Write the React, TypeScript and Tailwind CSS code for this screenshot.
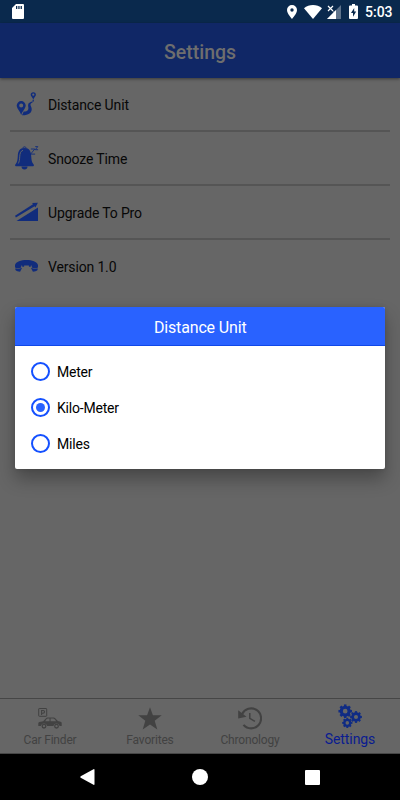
import type { ReactNode } from "react";
import clsx from "clsx";

type IconProps = { className?: string };

function RouteIcon({ className }: IconProps) {
  return (
    <svg viewBox="0 0 24 24" className={className} fill="currentColor">
      <path
        fillRule="evenodd"
        d="M6.2 9.1a4.500 4.500 0 0 0-4.500 4.500c0 2.900 3.200 5.300 4.500 9.400 1.300-4.100 4.500-6.500 4.500-9.400a4.500 4.500 0 0 0-4.500-4.500Zm0 2.400a2 2 0 1 1 0 4 2 2 0 0 1 0-4Z"
      />
      <path d="M7 23.300c5.800.3 10.100-2 9.700-6.500-.2-2.400-1.800-3.300-1.100-4.700.4-.8 1.300-1.100 2-1.500l-.6-1c-1.600.5-3.800 1.400-3.900 3.300-.1 1.900.7 2.800.1 4.500-.6 1.600-2.500 2.100-4.500 2.200Z" />
      <path
        fillRule="evenodd"
        d="M18.300.2a2.600 2.600 0 0 0-2.600 2.600c0 1.600 1.700 2.500 2.600 4.600.9-2.100 2.600-3 2.600-4.600A2.600 2.600 0 0 0 18.300.2Zm0 1.400a1.100 1.100 0 1 1 0 2.200 1.100 1.100 0 0 1 0-2.200Z"
      />
      <path d="M17.600 7.800h1.300l-.2 1.800-1.200.7Z" />
    </svg>
  );
}

function SnoozeIcon({ className }: IconProps) {
  return (
    <svg viewBox="0 0 24 24" className={className} fill="currentColor">
      <path d="M9.500 2.100c5 0 6.500 3.400 6.700 7.900.2 4.100.6 6.600 2.300 8.300.8.900.3 2-.8 2H1.300c-1.100 0-1.600-1.100-.8-2 1.700-1.700 2.100-4.200 2.300-8.300.2-4.500 1.700-7.900 6.700-7.900Z" />
      <path d="M6.500 20.600h6c0 1.900-1.200 3-3 3s-3-1.100-3-3Z" />
      <path d="M7.800 2.500c0-2.200 3.400-2.200 3.400 0" fill="none" stroke="currentColor" />
      <path d="M8 4.300c-2.500.8-3.100 3.100-3.300 6.600-.1 2.700-.5 5-1.400 6.600" fill="none" stroke="#666" strokeWidth=".9" />
      <path d="M15.900 3h3.900l-4.200 5.100h4.500M20.200.6h2.600l-2.500 3.100h2.800" fill="none" stroke="currentColor" strokeWidth=".9" />
    </svg>
  );
}

function UpgradeIcon({ className }: IconProps) {
  return (
    <svg viewBox="0 0 24 24" className={className} fill="currentColor">
      <path d="M1.500 21 23 7.600V21Z" />
      <path d="m0 15.700 18-11.400-.9-1.300 5.800-.3-2.500 4.900-.8-1.300L.9 17.600Z" />
    </svg>
  );
}

function PhoneIcon({ className }: IconProps) {
  return (
    <svg viewBox="0 0 24 24" className={className} fill="currentColor">
      <path d="M0 10C1 6.600 6 5 11.500 5S22 6.600 23 10v2.600c-1.700 1-3.800.8-6 .2l-.4-2.300H6.400L6 12.800c-2.200.6-4.300.8-6-.2Z" />
      <path d="M.4 13.300c2 .6 4 .4 6.700-.6l-2 4C3.400 16.600 1.500 16 .4 15ZM22.600 13.300c-2 .6-4 .4-6.700-.6l2 4c1.700-.1 3.600-.7 4.700-1.700Z" />
      <path d="M7.200 9.500h1.900v2.300H7.200ZM13.900 9.500h1.900v2.300h-1.900Z" />
    </svg>
  );
}

function CarIcon({ className }: IconProps) {
  return (
    <svg viewBox="0 0 24 24" className={className} fill="currentColor">
      <rect x=".7" y="1.500" width="8" height="7.800" rx=".6" fill="none" stroke="currentColor" strokeWidth="1" />
      <path d="M3.600 7.900V3.500h1.500c1.900 0 1.900 2.700 0 2.700H4" fill="none" stroke="currentColor" strokeWidth="1.100" />
      <path
        fillRule="evenodd"
        d="M.3 19v-2.200c0-1 .4-1.500 1.200-1.700l3.700-.8 2.300-2.500c.8-.9 1.500-1.200 2.600-1.200h4.600c1.400 0 2.400.4 3.200 1.300l2 2.100 2.700.7c.8.200 1.100.7 1.100 1.600V19h-2.100a3.200 3.200 0 0 0-6.200 0H9.100a3.200 3.200 0 0 0-6.200 0Zm6.900-4.800h4.300v-2.600h-1.400c-.8 0-1.300.2-1.700.7Zm5.400 0h5.600l-1.200-1.500c-.7-.8-1.400-1.100-2.400-1.100h-2Z"
      />
      <circle cx="6" cy="19.200" r="1.800" fill="none" stroke="currentColor" strokeWidth="1.300" />
      <circle cx="18.500" cy="19.200" r="1.800" fill="none" stroke="currentColor" strokeWidth="1.300" />
    </svg>
  );
}

function StarIcon({ className }: IconProps) {
  return (
    <svg viewBox="0 0 24 24" className={className} fill="currentColor">
      <path d="m12 .3 2.900 8h8.800l-7 5.500 2.600 8.700-7.300-5.100-7.300 5.100 2.600-8.700-7-5.500h8.800Z" />
    </svg>
  );
}

function HistoryIcon({ className }: IconProps) {
  return (
    <svg viewBox="0 0 24 24" className={className}>
      <path d="M4 7.200A10 10 0 1 1 5.500 17.900" fill="none" stroke="currentColor" strokeWidth="2.100" />
      <path d="m.2 3.200v8.200l8.300-1.600Z" fill="currentColor" />
      <path d="M11.800 5.900v5.500l5.100 3" fill="none" stroke="currentColor" strokeWidth="1.500" />
    </svg>
  );
}

const GEARS = [
  { x: 7.2, y: 7.2, scale: 0.98 },
  { x: 18, y: 13, scale: 0.85 },
  { x: 9.3, y: 18.9, scale: 0.74 },
];
const TEETH = [0, 45, 90, 135, 180, 225, 270, 315];

function GearsIcon({ className }: IconProps) {
  return (
    <svg viewBox="0 0 24 24" className={className}>
      {GEARS.map((gear) => (
        <g key={gear.x} transform={`translate(${gear.x} ${gear.y}) scale(${gear.scale})`}>
          <circle r="4" fill="none" stroke="currentColor" strokeWidth="3.200" />
          {TEETH.map((angle) => (
            <rect key={angle} x="-1.300" y="-6.900" width="2.600" height="2.500" fill="currentColor" transform={`rotate(${angle})`} />
          ))}
        </g>
      ))}
    </svg>
  );
}

function StatusBar() {
  return (
    <div className="flex h-[23px] shrink-0 items-center bg-[#0a294d] pr-2 pl-3 text-white">
      <svg viewBox="0 0 12 15" className="h-[15px] w-3" fill="currentColor">
        <path fillRule="evenodd" d="M4 0h7a1 1 0 0 1 1 1v13a1 1 0 0 1-1 1H1a1 1 0 0 1-1-1V4Zm0 2v3h1.300V2Zm2.300 0v3h1.300V2Zm2.300 0v3h1.300V2Z" />
      </svg>
      <svg viewBox="0 0 10 14" className="ml-auto h-[14px] w-[10px]" fill="currentColor">
        <path fillRule="evenodd" d="M5 0a5 5 0 0 0-5 5c0 3.600 5 9 5 9s5-5.400 5-9a5 5 0 0 0-5-5Zm0 3.300a1.700 1.700 0 1 1 0 3.400 1.700 1.700 0 0 1 0-3.400Z" />
      </svg>
      <svg viewBox="0 0 18 14" className="ml-[7px] h-[14px] w-[18px]" fill="currentColor">
        <path d="M0 3.300C5-1 13-1 18 3.300L9 14Z" />
      </svg>
      <svg viewBox="0 0 14 14" className="ml-[5px] h-[14px] w-[14px]">
        <path d="M14 0v14H0l6-6V6h2Z" fill="#fff" opacity=".35" />
        <path d="M9 5v9H0Z" fill="#fff" />
        <path d="m1 1 5 5m0-5L1 6" fill="none" stroke="#fff" strokeWidth="1.200" />
      </svg>
      <svg viewBox="0 0 9 15" className="ml-2 h-[15px] w-[9px]" fill="currentColor">
        <path fillRule="evenodd" d="M3 0h3v1.500h2a1 1 0 0 1 1 1V14a1 1 0 0 1-1 1H1a1 1 0 0 1-1-1V2.500a1 1 0 0 1 1-1h2Zm2.200 3.900L2 9h2v3.700L7.200 7.500h-2Z" />
      </svg>
      <span className="ml-[7px] w-[27px] pt-px text-[14px] leading-none font-medium whitespace-nowrap">5:03</span>
    </div>
  );
}

function SettingsRow({ icon, label, last }: { icon: ReactNode; label: string; last?: boolean }) {
  return (
    <div className={clsx("flex h-[54px] items-center gap-[9px] pl-[5px]", !last && "border-b-2 border-[#555]")}>
      {icon}
      <span className={clsx("text-[14px] tracking-[-0.15px] text-[#080808]", !last && "pt-[2px]")}>{label}</span>
    </div>
  );
}

const OPTIONS = ["Meter", "Kilo-Meter", "Miles"];

function DistanceDialog({ selected }: { selected: string }) {
  return (
    <div className="absolute top-[307px] right-[15px] left-[15.4px] h-[162px] rounded-[2px] bg-white shadow-[0_10px_18px_rgba(0,0,0,0.3),0_0_4px_rgba(0,0,0,0.12)]">
      <div className="flex h-[39.4px] items-center justify-center rounded-t-[2px] border-b border-[#1048e8] bg-[#2962ff] pt-[4px] text-[16px] tracking-[-0.15px] text-white">
        Distance Unit
      </div>
      <div className="flex flex-col pt-[7px] pl-[15.6px]">
        {OPTIONS.map((option) => (
          <div key={option} className="flex h-9 items-center gap-[7px]">
            <span className="flex h-[19px] w-[19px] items-center justify-center rounded-full border-2 border-[#1450ff]">
              {option === selected && <span className="h-[9px] w-[9px] rounded-full bg-[#2962ff]" />}
            </span>
            <span className="pt-[2px] text-[14px] tracking-[-0.2px] text-black">{option}</span>
          </div>
        ))}
      </div>
    </div>
  );
}

function TabItem({ icon, label, active }: { icon: ReactNode; label: string; active?: boolean }) {
  return (
    <div className={clsx("flex flex-1 flex-col items-center", active ? "pt-[5px] text-[#102c84]" : "pt-2 text-[#424242]")}>
      {icon}
      <span className={clsx("leading-4 whitespace-nowrap", active ? "mt-[3px] text-[14px] tracking-[-0.1px] text-[#0a1c90]" : "mt-px text-[12px] tracking-[-0.18px]")}>
        {label}
      </span>
    </div>
  );
}

function NavBar() {
  return (
    <div className="flex h-[46px] shrink-0 items-center justify-center gap-[97px] bg-black text-white">
      <svg viewBox="0 0 15 16" className="h-4 w-[15px]" fill="currentColor">
        <path d="M13.500.2Q14.500-.2 14.500 1v14q0 1.200-1 .8L.7 8.800Q0 8 .7 7.200Z" />
      </svg>
      <span className="h-4 w-4 rounded-full bg-white" />
      <span className="h-[15px] w-[15px] rounded-[1px] bg-white" />
    </div>
  );
}

export default function App() {
  return (
    <div className="relative flex h-[800px] w-[400px] flex-col overflow-hidden bg-[#666] font-['Roboto',sans-serif]">
      <StatusBar />
      <header className="flex h-[55px] shrink-0 items-center justify-center bg-[#102766] pt-[4px] text-[19.5px] font-medium text-[#6e6e6e] shadow-[0_1px_3px_rgba(0,0,0,0.45)]">
        Settings
      </header>
      <main className="flex flex-1 flex-col px-[10px] text-[#112c7c]">
        <SettingsRow icon={<RouteIcon className="h-6 w-6" />} label="Distance Unit" />
        <SettingsRow icon={<SnoozeIcon className="h-6 w-6" />} label="Snooze Time" />
        <SettingsRow icon={<UpgradeIcon className="h-6 w-6" />} label="Upgrade To Pro" />
        <SettingsRow icon={<PhoneIcon className="h-6 w-6" />} label="Version 1.0" last />
      </main>
      <nav className="flex h-[56px] shrink-0 border-t border-b border-[#464646]">
        <TabItem icon={<CarIcon className="h-6 w-6" />} label="Car Finder" />
        <TabItem icon={<StarIcon className="h-6 w-6" />} label="Favorites" />
        <TabItem icon={<HistoryIcon className="h-6 w-6" />} label="Chronology" />
        <TabItem icon={<GearsIcon className="h-6 w-6" />} label="Settings" active />
      </nav>
      <NavBar />
      <DistanceDialog selected="Kilo-Meter" />
    </div>
  );
}
